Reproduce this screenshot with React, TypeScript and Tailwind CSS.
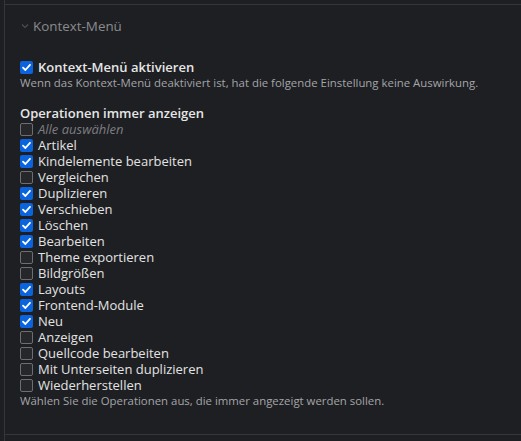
import React from 'react';

// ── Checkbox row ──────────────────────────────────────────────────────────────

interface Op {
  label:    string;
  checked:  boolean;
  muted?:   boolean;
}

const OPS: Op[] = [
  { label: 'Alle auswählen',              checked: false, muted: true },
  { label: 'Artikel',                     checked: true  },
  { label: 'Kindelemente bearbeiten',     checked: true  },
  { label: 'Vergleichen',                 checked: false },
  { label: 'Duplizieren',                 checked: true  },
  { label: 'Verschieben',                 checked: true  },
  { label: 'Löschen',                     checked: true  },
  { label: 'Bearbeiten',                  checked: true  },
  { label: 'Theme exportieren',           checked: false },
  { label: 'Bildgrößen',                  checked: false },
  { label: 'Layouts',                     checked: true  },
  { label: 'Frontend-Module',             checked: true  },
  { label: 'Neu',                         checked: true  },
  { label: 'Anzeigen',                    checked: false },
  { label: 'Quellcode bearbeiten',        checked: false },
  { label: 'Mit Unterseiten duplizieren', checked: false },
  { label: 'Wiederherstellen',            checked: false },
];

function Box({ checked }: { checked: boolean }) {
  if (!checked) {
    return (
      <span className="w-[13px] h-[13px] shrink-0 rounded-[2px] border border-[#6e6e72] bg-[#26272b]" />
    );
  }
  return (
    <span className="w-[13px] h-[13px] shrink-0 rounded-[2px] bg-[#0b63dd] flex items-center justify-center">
      <svg width="11" height="11" viewBox="0 0 11 11" fill="none">
        <path d="M2 5.6 L4.4 8 L9 2.8" stroke="#ffffff" strokeWidth="1.8" strokeLinecap="round" strokeLinejoin="round" />
      </svg>
    </span>
  );
}

// ── App ───────────────────────────────────────────────────────────────────────

export default function App() {
  return (
    <div
      className="w-[521px] h-[441px] bg-[#1e1f22] overflow-hidden"
      style={{ fontFamily: '"Open Sans", "Noto Sans", sans-serif' }}
    >
      <div className="ml-[4px] h-full border-l border-[#34363b] flex flex-col">
        <div className="mt-[4px] border-t border-[#34363b]" />

        <div className="flex-1 pl-[15px]">
          {/* Section header */}
          <div className="flex items-center gap-[4px] h-[20px] mt-[11px] text-[13.4px] leading-[20px] text-[#8a8b8f]">
            <svg width="8" height="8" viewBox="0 0 8 8" fill="none" className="ml-[1px]">
              <path d="M1 2.5 L4 5.5 L7 2.5" stroke="#4c4d52" strokeWidth="1.2" />
            </svg>
            <span>Kontext-Menü</span>
          </div>

          {/* Enable */}
          <div className="mt-[23px] flex items-center gap-[5px] h-[16px]">
            <Box checked />
            <span className="text-[13px] leading-[16px] font-semibold text-[#e6e6e6]">Kontext-Menü aktivieren</span>
          </div>
          <div className="text-[11.4px] leading-[16px] text-[#a4a5a9]">
            Wenn das Kontext-Menü deaktiviert ist, hat die folgende Einstellung keine Auswirkung.
          </div>

          {/* Operations */}
          <div className="mt-[14px] text-[13px] leading-[16px] font-semibold text-[#e6e6e6]">
            Operationen immer anzeigen
          </div>
          <div className="flex flex-col">
            {OPS.map(({ label, checked, muted }) => (
              <div key={label} className="flex items-center gap-[5px] h-[16px]">
                <Box checked={checked} />
                <span
                  className={
                    muted
                      ? 'text-[13px] leading-[16px] italic text-[#7c7d81]'
                      : 'text-[13px] leading-[16px] text-[#e3e3e3]'
                  }
                >
                  {label}
                </span>
              </div>
            ))}
          </div>
          <div className="text-[11.4px] leading-[16px] text-[#a4a5a9]">
            Wählen Sie die Operationen aus, die immer angezeigt werden sollen.
          </div>
        </div>

        <div className="mb-[6px] border-t border-[#34363b]" />
      </div>
    </div>
  );
}
